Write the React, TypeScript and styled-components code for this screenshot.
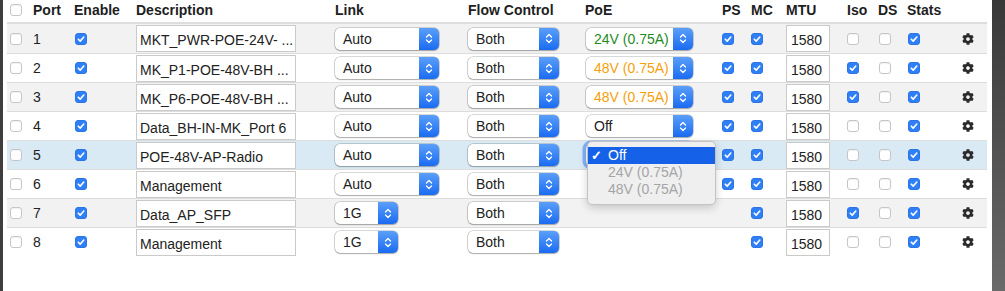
import styled, { createGlobalStyle } from "styled-components";
import { FaCog } from "react-icons/fa";

const GlobalStyle = createGlobalStyle`
  html, body {
    margin: 0;
    padding: 0;
    background: #ffffff;
  }
  body {
    font-family: "Liberation Sans", Arial, Helvetica, sans-serif;
    font-size: 14px;
    color: #222222;
  }
`;

const Page = styled.div`
  display: flex;
  height: 291px;
  overflow: hidden;
`;

const EdgeLeft = styled.div`
  width: 3px;
  flex-shrink: 0;
  background: #3e3e3e;
`;

const EdgeRight = styled.div`
  width: 13px;
  flex-shrink: 0;
  background: linear-gradient(to bottom, #383838, #6a6a6a);
`;

const Main = styled.div`
  flex: 1;
  padding: 0 5px 0 4px;
`;

const columns =
  "23px 41px 62px 199px 133px 117px 137px 29px 35px 61px 31px 29px 41px 39px";

const HeadRow = styled.div`
  display: grid;
  grid-template-columns: ${columns};
  padding: 0 0 3px 3px;
  height: 24px;
  box-sizing: border-box;
  border-bottom: 2px solid #dddddd;
  font-weight: bold;
  color: #1e1e1e;
`;

const Row = styled.div<{ $bg: string; $first?: boolean }>`
  display: grid;
  grid-template-columns: ${columns};
  padding-left: 3px;
  height: 29px;
  box-sizing: border-box;
  border-top: ${(p) => (p.$first ? "none" : "1px solid #dddddd")};
  background: ${(p) => p.$bg};
`;

const Cell = styled.div<{ $pl?: number; $center?: boolean }>`
  display: flex;
  align-items: center;
  justify-content: ${(p) => (p.$center ? "center" : "flex-start")};
  padding-left: ${(p) => p.$pl ?? 0}px;
  position: relative;
  min-width: 0;
  white-space: nowrap;
`;

const Box = styled.span<{ $on: boolean }>`
  display: inline-flex;
  align-items: center;
  justify-content: center;
  width: 12px;
  height: 12px;
  box-sizing: border-box;
  border-radius: 3px;
  background: ${(p) => (p.$on ? "#2f7ff7" : "#ffffff")};
  border: 1px solid ${(p) => (p.$on ? "#2a74e6" : "#c6c6c6")};
  box-shadow: ${(p) => (p.$on ? "none" : "inset 0 1px 1px rgba(0,0,0,0.06)")};
`;

const Field = styled.div<{ $w: number; $pl: number }>`
  width: ${(p) => p.$w}px;
  height: 27px;
  box-sizing: border-box;
  border: 1px solid #cacaca;
  background: #ffffff;
  padding: 6px 0 0 ${(p) => p.$pl}px;
  line-height: 16px;
  overflow: hidden;
  white-space: nowrap;
  color: #222;
`;

const SelectBox = styled.div<{ $w: number; $focus?: boolean }>`
  width: ${(p) => p.$w}px;
  height: 22px;
  display: flex;
  border-radius: 5px;
  background: #ffffff;
  box-shadow: ${(p) =>
    p.$focus
      ? "0 0 0 3.5px rgba(70, 140, 250, 0.6)"
      : "0 0 0 0.5px rgba(0,0,0,0.3), 0 1px 1.5px rgba(0,0,0,0.22)"};
`;

const SelectText = styled.span<{ $color?: string }>`
  flex: 1;
  padding-left: 8px;
  line-height: 22px;
  color: ${(p) => p.$color ?? "#222"};
  overflow: hidden;
`;

const Arrow = styled.span`
  width: 20px;
  border-radius: 0 5px 5px 0;
  background: linear-gradient(to bottom, #5b9ff9, #1a6bf1);
  display: flex;
  align-items: center;
  justify-content: center;
`;

const Menu = styled.div`
  position: absolute;
  top: 0;
  left: 2px;
  width: 129px;
  height: 64px;
  box-sizing: border-box;
  padding-top: 5px;
  background: #efefef;
  border: 1px solid #c3c3c3;
  border-radius: 5px;
  box-shadow: 0 3px 9px rgba(0, 0, 0, 0.18);
  z-index: 10;
`;

const MenuItem = styled.div<{ $active?: boolean }>`
  display: flex;
  height: 17px;
  line-height: 17px;
  padding-left: 3px;
  color: ${(p) => (p.$active ? "#ffffff" : "#a5a5a5")};
  background: ${(p) => (p.$active ? "#1562e9" : "transparent")};
`;

const Tick = styled.span`
  display: inline-block;
  width: 17px;
  font-size: 13px;
  font-weight: bold;
  overflow: hidden;
`;

const Check = ({ on }: { on: boolean }) => (
  <Box $on={on}>
    {on && (
      <svg width="10" height="10" viewBox="0 0 10 10">
        <path
          d="M2.3 5.2 L4.2 7.1 L7.8 3"
          fill="none"
          stroke="#fff"
          strokeWidth="1.6"
          strokeLinecap="round"
          strokeLinejoin="round"
        />
      </svg>
    )}
  </Box>
);

const Select = ({
  w,
  text,
  color,
  focus,
}: {
  w: number;
  text: string;
  color?: string;
  focus?: boolean;
}) => (
  <SelectBox $w={w} $focus={focus}>
    <SelectText $color={color}>{focus ? "" : text}</SelectText>
    <Arrow>
      <svg width="8" height="13" viewBox="0 0 8 13">
        <path
          d="M1.5 5 L4 2.5 L6.5 5 M1.5 8 L4 10.5 L6.5 8"
          fill="none"
          stroke="#fff"
          strokeWidth="1.3"
          strokeLinecap="round"
          strokeLinejoin="round"
        />
      </svg>
    </Arrow>
  </SelectBox>
);

interface Port {
  n: number;
  desc: string;
  link: string;
  poe: { t: string; c: string } | null;
  ps: boolean;
  iso: boolean;
  open?: boolean;
}

const GREEN = "#1f8b1f";
const ORANGE = "#f6a00c";

const ports: Port[] = [
  { n: 1, desc: "MKT_PWR-POE-24V- ...", link: "Auto", poe: { t: "24V (0.75A)", c: GREEN }, ps: true, iso: false },
  { n: 2, desc: "MK_P1-POE-48V-BH ...", link: "Auto", poe: { t: "48V (0.75A)", c: ORANGE }, ps: true, iso: true },
  { n: 3, desc: "MK_P6-POE-48V-BH ...", link: "Auto", poe: { t: "48V (0.75A)", c: ORANGE }, ps: true, iso: true },
  { n: 4, desc: "Data_BH-IN-MK_Port 6", link: "Auto", poe: { t: "Off", c: "#222" }, ps: true, iso: false },
  { n: 5, desc: "POE-48V-AP-Radio", link: "Auto", poe: { t: "Off", c: "#222" }, ps: true, iso: false, open: true },
  { n: 6, desc: "Management", link: "Auto", poe: null, ps: true, iso: false },
  { n: 7, desc: "Data_AP_SFP", link: "1G", poe: null, ps: false, iso: true },
  { n: 8, desc: "Management", link: "1G", poe: null, ps: false, iso: false },
];

const rowBg = (p: Port, i: number) => {
  if (p.open) return "#d9eaf4";
  return i % 2 === 0 ? "#f2f2f2" : "#ffffff";
};

export default function App() {
  return (
    <Page>
      <GlobalStyle />
      <EdgeLeft />
      <Main>
        <HeadRow>
          <Cell>
            <Check on={false} />
          </Cell>
          <Cell>Port</Cell>
          <Cell>Enable</Cell>
          <Cell>Description</Cell>
          <Cell>Link</Cell>
          <Cell>Flow Control</Cell>
          <Cell>PoE</Cell>
          <Cell>PS</Cell>
          <Cell>MC</Cell>
          <Cell>MTU</Cell>
          <Cell>Iso</Cell>
          <Cell>DS</Cell>
          <Cell>Stats</Cell>
          <Cell />
        </HeadRow>
        {ports.map((p, i) => (
          <Row key={p.n} $bg={rowBg(p, i)} $first={i === 0}>
            <Cell>
              <Check on={false} />
            </Cell>
            <Cell>{p.n}</Cell>
            <Cell $pl={1}>
              <Check on />
            </Cell>
            <Cell>
              <Field $w={160} $pl={3}>
                {p.desc}
              </Field>
            </Cell>
            <Cell>
              <Select w={p.link === "1G" ? 63 : 104} text={p.link} />
            </Cell>
            <Cell>
              <Select w={91} text="Both" />
            </Cell>
            <Cell $pl={1}>
              {p.poe && (
                <Select w={107} text={p.poe.t} color={p.poe.c} focus={p.open} />
              )}
              {p.open && (
                <Menu>
                  <MenuItem $active>
                    <Tick>✓</Tick>
                    <span>Off</span>
                  </MenuItem>
                  <MenuItem>
                    <Tick />
                    <span>24V (0.75A)</span>
                  </MenuItem>
                  <MenuItem>
                    <Tick />
                    <span>48V (0.75A)</span>
                  </MenuItem>
                </Menu>
              )}
            </Cell>
            <Cell>{p.ps && <Check on />}</Cell>
            <Cell>
              <Check on />
            </Cell>
            <Cell>
              <Field $w={44} $pl={4}>
                1580
              </Field>
            </Cell>
            <Cell>
              <Check on={p.iso} />
            </Cell>
            <Cell $pl={1}>
              <Check on={false} />
            </Cell>
            <Cell $pl={1}>
              <Check on />
            </Cell>
            <Cell $center>
              <FaCog size={12} color="#2b2b2b" />
            </Cell>
          </Row>
        ))}
      </Main>
      <EdgeRight />
    </Page>
  );
}
